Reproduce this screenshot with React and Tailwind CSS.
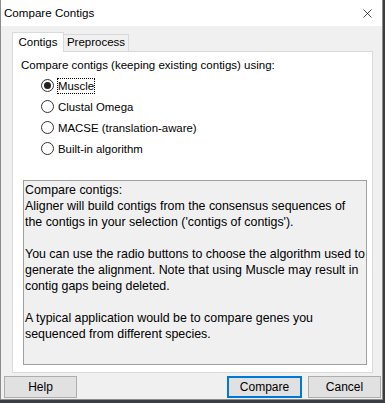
import { X } from "lucide-react";

const ui = { fontFamily: '"Liberation Sans", Arial, sans-serif' };

function Radio({ label, checked, focused }) {
  return (
    <div className="flex items-center h-[21px]">
      <span className="w-[13px] h-[13px] rounded-full border border-[#333] bg-white flex items-center justify-center">
        {checked && <span className="w-[7px] h-[7px] rounded-full bg-[#222]" />}
      </span>
      <span
        className={`ml-[4px] text-[11.4px] leading-[14px] text-black ${
          focused ? "outline outline-1 outline-dotted outline-black" : ""
        }`}
      >
        {label}
      </span>
    </div>
  );
}

export default function App() {
  return (
    <div className="w-[385px] h-[403px] bg-[#3a3d42] overflow-hidden" style={ui}>
      <div className="w-[383px] h-[400px] bg-[#f0f0f0] border-l border-r border-b border-[#8c8c8c] flex flex-col">
        {/* Title bar */}
        <div className="h-[26px] bg-white flex items-center justify-between pl-[3px] pr-[7px]">
          <span className="text-[11.6px] text-black">Compare Contigs</span>
          <X className="w-[15px] h-[15px] text-black" strokeWidth={1.1} />
        </div>

        {/* Tabs */}
        <div className="mt-[6px] pl-[11px] flex items-end h-[19px]">
          <div className="w-[52px] h-[20px] -mb-px relative z-10 bg-white border border-b-0 border-[#d9d9d9] flex items-center justify-center text-[11.5px] text-black">
            Contigs
          </div>
          <div className="w-[65px] h-[17px] bg-[#f0f0f0] border border-l-0 border-b-0 border-[#d9d9d9] flex items-center justify-center text-[11.5px] text-black">
            Preprocess
          </div>
        </div>

        {/* Tab page */}
        <div className="ml-[11px] w-[361px] h-[322px] bg-white border border-[#d9d9d9] pl-[8px] pt-[6px]">
          <div className="text-[11.5px] leading-[14px] text-black">
            Compare contigs (keeping existing contigs) using:
          </div>
          <div className="mt-[3px] ml-[20px] flex flex-col">
            <Radio label="Muscle" checked focused />
            <Radio label="Clustal Omega" />
            <Radio label="MACSE (translation-aware)" />
            <Radio label="Built-in algorithm" />
          </div>
          <div className="mt-[21px] ml-[2px] w-[344px] h-[185px] bg-[#f0f0f0] border border-[#a0a0a0] pl-[1px] pt-[1px] text-[12.4px] leading-[16px] text-black whitespace-nowrap overflow-hidden">
            <p>Compare contigs:</p>
            <p>Aligner will build contigs from the consensus sequences of</p>
            <p>the contigs in your selection ('contigs of contigs').</p>
            <p>&nbsp;</p>
            <p>You can use the radio buttons to choose the algorithm used to</p>
            <p>generate the alignment. Note that using Muscle may result in</p>
            <p>contig gaps being deleted.</p>
            <p>&nbsp;</p>
            <p>A typical application would be to compare genes you</p>
            <p>sequenced from different species.</p>
          </div>
        </div>

        {/* Buttons */}
        <div className="mt-[3px] flex items-start justify-between pl-[3px] pr-[1px]">
          <button className="w-[73px] h-[22px] bg-[#e1e1e1] border border-[#adadad] text-[12px] text-black">
            Help
          </button>
          <div className="flex gap-[6px]">
            <button className="w-[75px] h-[22px] bg-[#e1e1e1] border-2 border-[#0078d7] text-[12px] text-black">
              Compare
            </button>
            <button className="w-[73px] h-[22px] bg-[#e1e1e1] border border-[#adadad] text-[12px] text-black">
              Cancel
            </button>
          </div>
        </div>
      </div>
    </div>
  );
}
